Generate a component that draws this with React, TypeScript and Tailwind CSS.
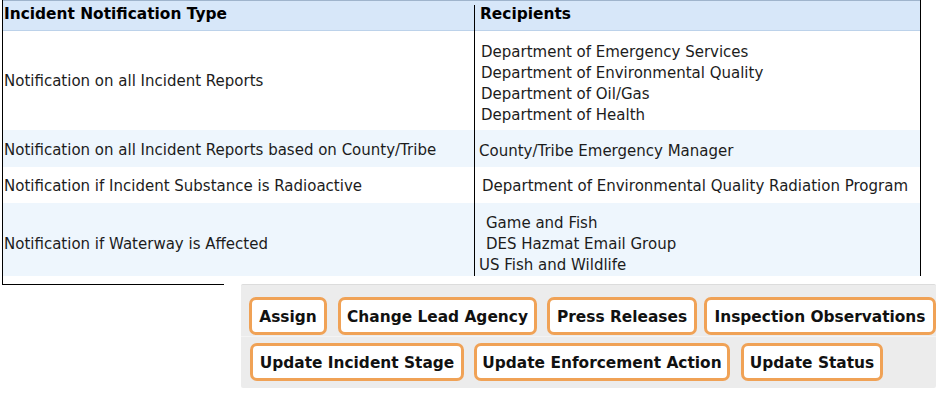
import React from "react";

const font = { fontFamily: '"DejaVu Sans", Verdana, sans-serif' };

function Btn({ label, w, cls }: { label: string; w: string; cls?: string }) {
  return (
    <div
      className={`h-[38px] ${w} ${cls ?? ""} flex items-center justify-center shrink-0 rounded-[7px] border-[3px] border-[#f0a256] bg-white pt-[4px] text-[15.4px] font-bold text-[#111] leading-none`}
    >
      {label}
    </div>
  );
}

export default function App() {
  return (
    <div className="w-[947px] h-[399px] bg-white overflow-hidden text-[#1c1c1c]" style={font}>
      {/* Table */}
      <div className="ml-[2px] w-[919px] border-l border-r border-black text-[15px] leading-[21px]">
        {/* Header */}
        <div className="flex h-[31px] bg-[#d7e7f9] border-t border-[#9fb4cc] border-b border-b-[#bcd2ea] text-black font-bold text-[15.4px]">
          <div className="w-[471px] pl-[1px] pt-[3px]">Incident Notification Type</div>
          <div className="flex-1 pl-[5px] border-l border-black mt-[4px] -mb-px">
            <span className="relative -top-[1px]">Recipients</span>
          </div>
        </div>
        {/* Row 1 */}
        <div className="flex h-[99px] bg-white">
          <div className="w-[471px] pl-[1px] pt-[2px] flex items-center">Notification on all Incident Reports</div>
          <div className="flex-1 border-l border-black pl-[6px] pt-[11px]">
            <div>Department of Emergency Services</div>
            <div>Department of Environmental Quality</div>
            <div>Department of Oil/Gas</div>
            <div>Department of Health</div>
          </div>
        </div>
        {/* Row 2 */}
        <div className="flex h-[37px] bg-[#eef6fd]">
          <div className="w-[471px] pl-[1px] pt-[3px] flex items-center">
            Notification on all Incident Reports based on County/Tribe
          </div>
          <div className="flex-1 border-l border-black pl-[4px] flex items-center pt-[5px]">
            County/Tribe Emergency Manager
          </div>
        </div>
        {/* Row 3 */}
        <div className="flex h-[36px] bg-white">
          <div className="w-[471px] pl-[1px] pt-[3px] flex items-center">
            Notification if Incident Substance is Radioactive
          </div>
          <div className="flex-1 border-l border-black pl-[7px] pt-[3px] flex items-center">
            Department of Environmental Quality Radiation Program
          </div>
        </div>
        {/* Row 4 */}
        <div className="flex h-[73px] bg-[#eef6fd]">
          <div className="w-[471px] pl-[1px] pt-[31px]">Notification if Waterway is Affected</div>
          <div className="flex-1 border-l border-black pt-[10px]">
            <div className="pl-[11px]">Game and Fish</div>
            <div className="pl-[11px]">DES Hazmat Email Group</div>
            <div className="pl-[4px]">US Fish and Wildlife</div>
          </div>
        </div>
      </div>
      <div className="ml-[2px] w-[222px] h-[9px] border-l border-b border-black" />

      {/* Button panel */}
      <div className="-mt-[1px] ml-[241px] w-[695px] h-[104px] bg-[#ececec] border-t border-[#dcdcdc] rounded-[2px] pt-[12px]">
        <div className="flex pl-[8px]">
          <Btn label="Assign" w="w-[78px]" />
          <Btn label="Change Lead Agency" w="w-[199px]" cls="ml-[11px]" />
          <Btn label="Press Releases" w="w-[150px]" cls="ml-[10px]" />
          <Btn label="Inspection Observations" w="w-[232px]" cls="ml-[7px]" />
        </div>
        <div className="mt-[1px] border-t border-[#f4f4f4] pt-[6px] flex pl-[9px]">
          <Btn label="Update Incident Stage" w="w-[214px]" />
          <Btn label="Update Enforcement Action" w="w-[256px]" cls="ml-[10px]" />
          <Btn label="Update Status" w="w-[142px]" cls="ml-[11px]" />
        </div>
      </div>
    </div>
  );
}
